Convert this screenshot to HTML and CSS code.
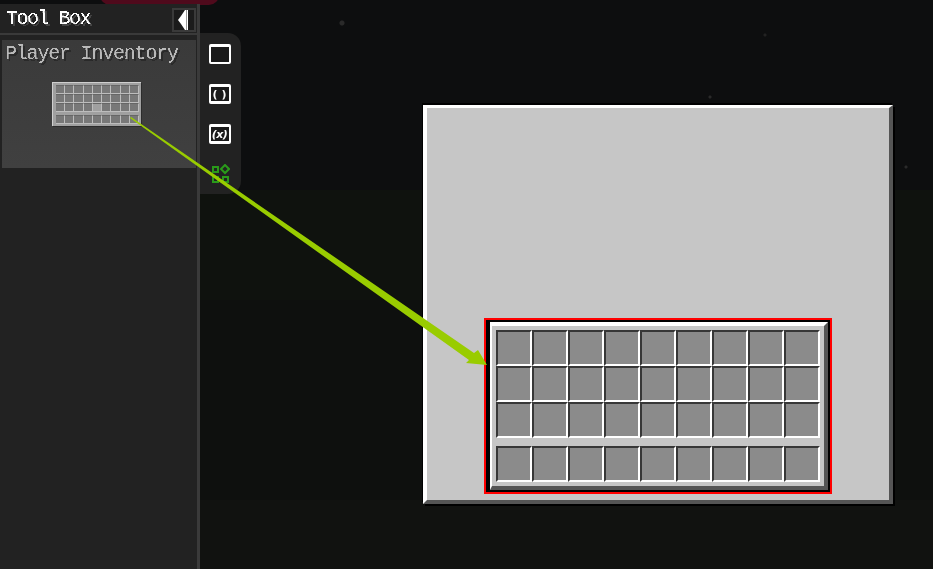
FILE: index.html
```html
<!DOCTYPE html>
<html lang="en">
<head>
<meta charset="utf-8">
<title>Tool Box</title>
<link rel="stylesheet" href="styles.css">
</head>
<body>
<svg class="defs" width="0" height="0" aria-hidden="true">
  <filter id="crisp" x="-5%" y="-5%" width="110%" height="110%">
    <feComponentTransfer><feFuncA type="discrete" tableValues="0 0 1 1"/></feComponentTransfer>
  </filter>
</svg>
<div class="app">
  <div class="tab-glow"></div>
  <aside class="sidebar">
    <header class="side-head">
      <span class="side-title">Tool Box</span>
      <button class="collapse" aria-label="Collapse">
        <svg width="12" height="20" viewBox="0 0 12 20"><path d="M0 10 3 6 5 3 7 0H10V20H7L5 17 3 14Z" fill="#fff"/><rect x="8" y="0" width="1" height="20" fill="#999"/></svg>
      </button>
    </header>
    <div class="side-body">
      <section class="item">
        <h3 class="item-title">Player Inventory</h3>
        <div class="thumb">
          <div class="thumb-grid">
            <i></i><i></i><i></i><i></i><i></i><i></i><i></i><i></i><i></i>
            <i></i><i></i><i></i><i></i><i></i><i></i><i></i><i></i><i></i>
            <i></i><i></i><i></i><i></i><i class="hot"></i><i></i><i></i><i></i><i></i>
          </div>
          <div class="thumb-grid">
            <i></i><i></i><i></i><i></i><i></i><i></i><i></i><i></i><i></i>
          </div>
        </div>
      </section>
    </div>
  </aside>
  <nav class="rail">
    <div class="win"></div>
    <div class="win win-code"><span class="paren">( )</span></div>
    <div class="win win-code"><span class="paren var">(x)</span></div>
    <svg class="blocks" width="20" height="20" viewBox="0 0 20 20" fill="none" stroke="#2a9a1a" stroke-width="2">
      <rect x="3" y="3" width="5" height="5"/>
      <path d="M15 1 19 5 15 9 11 5Z"/>
      <rect x="3" y="13" width="5" height="5"/>
      <rect x="13" y="13" width="5" height="5"/>
    </svg>
  </nav>
  <main class="canvas">
    <div class="gui">
      <div class="selection">
        <div class="inv">
          <div class="slots">
            <i></i><i></i><i></i><i></i><i></i><i></i><i></i><i></i><i></i>
            <i></i><i></i><i></i><i></i><i></i><i></i><i></i><i></i><i></i>
            <i></i><i></i><i></i><i></i><i></i><i></i><i></i><i></i><i></i>
          </div>
          <div class="slots">
            <i></i><i></i><i></i><i></i><i></i><i></i><i></i><i></i><i></i>
          </div>
        </div>
      </div>
    </div>
  </main>
  <svg class="arrow" width="933" height="569" viewBox="0 0 933 569">
    <path d="M131 117 474 353 478 350 487 365 466 363 469 360 130 118Z" fill="#99cc00"/>
  </svg>
</div>
</body>
</html>
```

FILE: styles.css
```css
* { box-sizing: border-box; margin: 0; padding: 0; }
html, body { width: 933px; height: 569px; overflow: hidden; background: #0d0e0f; }
.defs { position: absolute; }
.app {
  position: relative;
  display: flex;
  align-items: flex-start;
  width: 933px;
  height: 569px;
  background:
    radial-gradient(circle at 342px 23px, #2a2a2a 0 2px, transparent 3px),
    radial-gradient(circle at 906px 167px, #2a2a2a 0 1px, transparent 2px),
    radial-gradient(circle at 710px 97px, #2a2a2a 0 1px, transparent 2px),
    radial-gradient(circle at 765px 35px, #222 0 1px, transparent 2px),
    linear-gradient(#0d0e0f 0 190px, #0f120e 190px 300px, #0e100e 300px 500px, #111210 500px);
}
.tab-glow {
  position: absolute;
  left: 100px;
  top: -20px;
  width: 119px;
  height: 25px;
  border-radius: 10px;
  background: #4f0a1c;
}
.sidebar {
  position: relative;
  flex: none;
  display: flex;
  flex-direction: column;
  width: 200px;
  height: 565px;
  margin-top: 4px;
  background: #222;
  border-right: 3px solid #3a3a3a;
}
.side-head {
  display: flex;
  align-items: center;
  justify-content: space-between;
  height: 31px;
  padding: 3px 1px 0 6px;
  background: #222;
  border-bottom: 2px solid #3a3a3a;
}
.side-title, .item-title {
  font-family: "Liberation Mono", monospace;
  font-size: 20px;
  font-weight: 400;
  line-height: 20px;
}
.side-title { color: #fff; letter-spacing: -1.5px; text-shadow: 2px 2px 0 #444; filter: url(#crisp); margin-top: -2px; }
.collapse {
  display: flex;
  align-items: center;
  justify-content: center;
  width: 24px;
  height: 24px;
  background: #1b1b1b;
  border: 2px solid #3a3a3a;
  margin-top: -1px;
}
.side-body { flex: 1; padding: 5px 1px 0 2px; }
.item { height: 128px; background: linear-gradient(#3a3a3a, #404040); }
.item-title { padding: 4px 0 0 3px; color: #b9b9b9; letter-spacing: -1.2px; text-shadow: 2px 2px 0 #2a2a2a; filter: url(#crisp); }
.thumb {
  display: flex;
  flex-direction: column;
  gap: 3px;
  width: 89px;
  height: 44px;
  margin: 18px 0 0 50px;
  padding: 2px 2px 2px 3px;
  background: #a0a0a0;
  border-top: 1px solid #cfcfcf;
  border-left: 1px solid #cfcfcf;
  box-shadow: 1px 1px 0 #2c2c2c;
}
.thumb-grid { display: grid; grid-template-columns: repeat(9, 1fr); grid-auto-rows: 9px; }
.thumb-grid i { background: #787878; border-right: 1px solid #bdbdbd; border-bottom: 1px solid #bdbdbd; border-top: 1px solid #666; }
.thumb-grid .hot { background: #a0a0a0; }
.rail {
  flex: none;
  display: flex;
  flex-direction: column;
  align-items: center;
  gap: 20px;
  width: 41px;
  height: 161px;
  margin-top: 33px;
  padding: 11px 2px 0 0;
  background: #222;
  border-radius: 0 13px 13px 0;
}
.win {
  display: flex;
  align-items: center;
  justify-content: center;
  width: 22px;
  height: 20px;
  background: #1a1a1a;
  border: 2px solid #fff;
  border-top-width: 3px;
  border-radius: 2px;
  color: #fff;
  font: 700 11px/1 "DejaVu Sans", sans-serif;
}
.win-code { border-bottom-width: 3px; }
.paren { white-space: pre; opacity: 0.99; }
.var { font-style: italic; letter-spacing: -0.5px; }
.canvas { flex: 1; padding: 105px 0 0 182px; }
.gui {
  width: 470px;
  height: 399px;
  padding: 210px 0 0 57px;
  background: #c6c6c6;
  border-top: 3px solid #fff;
  border-left: 4px solid #fff;
  border-right: 4px solid #555;
  border-bottom: 4px solid #555;
  box-shadow: 2px 2px 0 #000, -1px -2px 0 #000;
}
.selection { width: 348px; height: 176px; border: 2px solid #f00; background: #000; padding: 2px 2px 2px 4px; }
.inv {
  display: flex;
  flex-direction: column;
  gap: 8px;
  width: 338px;
  height: 168px;
  padding: 4px;
  background: #c6c6c6;
  border-top: 4px solid #fff;
  border-left: 2px solid #fff;
  border-right: 4px solid #555;
  border-bottom: 4px solid #555;
}
.slots { display: grid; grid-template-columns: repeat(9, 36px); grid-auto-rows: 36px; }
.slots i { background: #8b8b8b; border: 2px solid; border-color: #373737 #fff #fff #373737; }
.arrow { position: absolute; left: 0; top: 0; pointer-events: none; }
```
